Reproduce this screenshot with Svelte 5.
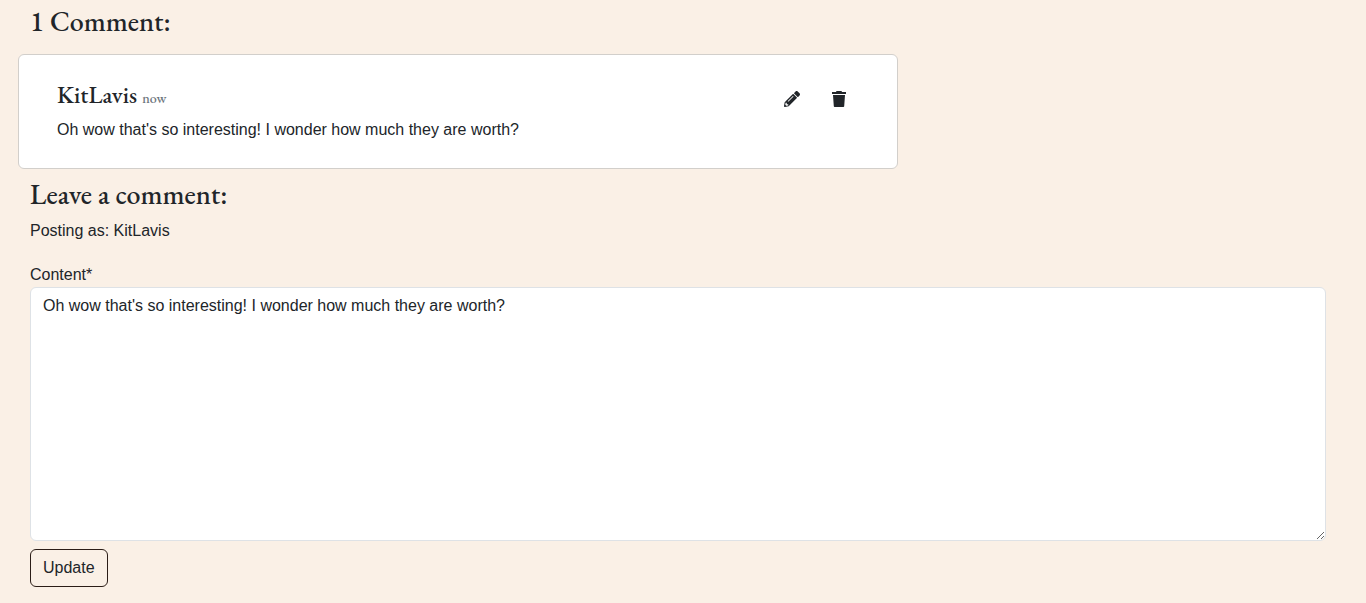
<script>
  let comment = "Oh wow that's so interesting! I wonder how much they are worth?";
  let content = $state(comment);
</script>

<main>
  <h3>1 Comment:</h3>
  <article class="card">
    <div class="body">
      <h4>KitLavis <small>now</small></h4>
      <p>{comment}</p>
    </div>
    <div class="actions">
      <button class="icon" type="button" aria-label="Edit comment">
        <svg viewBox="0 0 512 512" width="16" height="16" fill="currentColor"><path d="M497.900 142.100l-46.100 46.100c-4.700 4.700-12.300 4.700-17 0l-111-111c-4.700-4.700-4.700-12.300 0-17l46.100-46.100c18.700-18.700 49.100-18.700 67.900 0l60.100 60.100c18.800 18.700 18.800 49.100 0 67.900zM284.200 99.800L21.600 362.400.4 483.900c-2.900 16.400 11.400 30.600 27.800 27.800l121.500-21.300 262.600-262.600c4.700-4.700 4.700-12.300 0-17l-111-111c-4.800-4.700-12.400-4.700-17.100 0zM124.100 339.900c-5.500-5.500-5.500-14.300 0-19.800l154-154c5.500-5.500 14.300-5.500 19.800 0s5.500 14.300 0 19.800l-154 154c-5.500 5.500-14.300 5.500-19.800 0zM88 424h48v36.300l-64.500 11.300-31.100-31.100L51.700 376H88v48z"/></svg>
      </button>
      <button class="icon" type="button" aria-label="Delete comment">
        <svg viewBox="0 0 14 16" width="14" height="16" fill="currentColor"><path d="M0 1h4l.5-1h5l.5 1h4v2H0zM1 4h12l-.8 11.300a.8.8 0 0 1-.8.700H2.600a.8.8 0 0 1-.8-.7z"/></svg>
      </button>
    </div>
  </article>
  <h3>Leave a comment:</h3>
  <p>Posting as: KitLavis</p>
  <form onsubmit={(e) => e.preventDefault()}>
    <label for="content">Content*</label>
    <textarea id="content" rows="10" bind:value={content}></textarea>
    <button class="submit" type="submit">Update</button>
  </form>
</main>

<style>
  :global(body) { margin: 0; background: #faf0e6; }
  main {
    padding: 4px 40px 16px 30px;
    color: #212529;
    font: 16px/24px "Liberation Sans", Arial, sans-serif;
  }
  h3, h4 {
    margin: 0;
    font-family: "EB Garamond", "Liberation Serif", serif;
    font-weight: 500;
  }
  h3 { font-size: 28px; line-height: 34px; margin-bottom: 8px; }
  h4 { font-size: 24px; line-height: 28px; margin-bottom: 6px; }
  small { font-size: 14px; color: #6c757d; }
  p { margin: 0; }
  .card {
    display: flex;
    justify-content: space-between;
    box-sizing: border-box;
    max-width: 880px;
    margin: 16px 0 8px -12px;
    padding: 26px 47px 26px 38px;
    background: #fff;
    border: 1px solid #d2cfcb;
    border-radius: 6px;
  }
  .actions { display: flex; align-items: flex-start; gap: 24px; }
  .icon { display: flex; padding: 10px 4px; border: 0; background: none; color: #212529; cursor: pointer; }
  form { margin-top: 20px; }
  label { display: block; }
  textarea {
    display: block;
    box-sizing: border-box;
    width: 100%;
    height: 254px;
    padding: 6px 12px;
    border: 1px solid #dee2e6;
    border-radius: 6px;
    background: #fff;
    color: #212529;
    font: inherit;
    resize: vertical;
  }
  .submit {
    margin-top: 8px;
    padding: 6px 12px;
    border: 1px solid #2b1d17;
    border-radius: 6px;
    background: none;
    color: #212529;
    font: inherit;
    cursor: pointer;
  }
</style>
